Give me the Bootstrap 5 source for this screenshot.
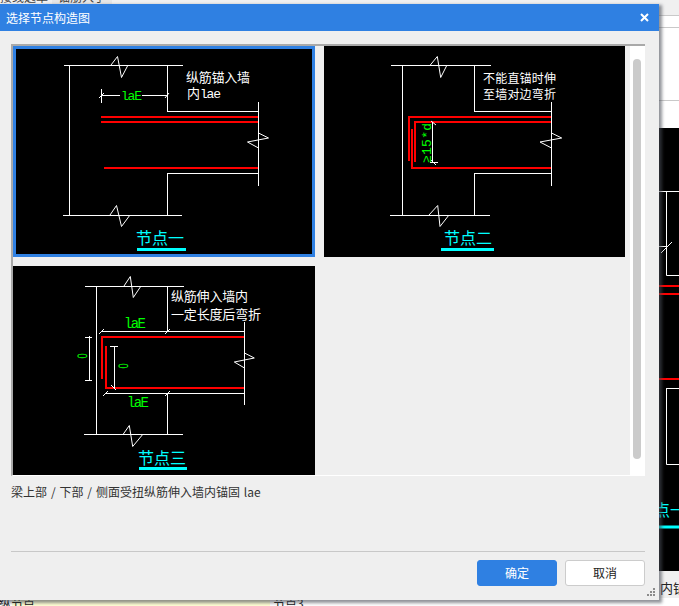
<!DOCTYPE html>
<html lang="zh">
<head>
<meta charset="utf-8">
<title>选择节点构造图</title>
<link href="https://cdn.jsdelivr.net/npm/bootstrap@5.3.0/dist/css/bootstrap.min.css" rel="stylesheet">
<style>
html,body{margin:0;padding:0;background:#f1f1f1;overflow:hidden}
body{font-family:"Noto Sans CJK SC","Liberation Sans",sans-serif;font-size:12px}
.desk{position:relative;width:679px;height:606px;overflow:hidden;background:#f0f0f0}
.bk-top{position:absolute;left:0;top:0;width:340px;height:4px;overflow:hidden;display:flex;gap:6px;line-height:12px;color:#444}
.bk-top span{background:#e6e6e6;padding:0 6px;height:14px;margin-top:-9px;white-space:nowrap}
.bk-top span:first-child{margin-left:-6px;padding:0 0 0 6px;width:52px;background:#f3f3f3}
.bk-right{position:absolute;left:659px;top:15px;width:20px;height:113px;background:#fff}
.bk-line{height:1px;background:#c9c9c9;position:absolute;left:0;right:0}
.bk-cad{position:absolute;left:659px;top:128px}
.bk-note{position:absolute;left:660px;top:580px;line-height:16px;white-space:nowrap;color:#222;font-size:13px}
.bk-strip{position:absolute;left:0;right:0;top:598px;height:8px;background:#fff;overflow:hidden}
.bk-yellow{position:absolute;left:12px;top:0;width:258px;height:8px;background:#ffffd4}
.bk-cell{position:absolute;top:-2px;line-height:14px;color:#111;font-size:12px;white-space:nowrap}
.dlg{position:absolute;left:0;top:4px;width:659px;height:596px;background:#efefef;box-shadow:2px 2px 3px 1px rgba(70,75,85,.6)}
.dlg-head{height:27px;background:#2f80e2;color:#fff;padding:0 6px;line-height:27px;font-size:12px}
.dlg-x{display:block;width:9px;height:9px;margin-right:4px}
.pane{margin:13px 14px 0 11px;height:432px;border-top:2px solid #a9a9a9;border-left:2px solid #a9a9a9;border-bottom:1px solid #fff;overflow:hidden}
.tiles{width:619px;display:grid;grid-template-columns:302px 301px;column-gap:9px;row-gap:9px;align-content:start;padding-top:0}
.tile{position:relative;background:#000;line-height:0}
.tile svg{display:block}
.tile-on{outline:3px solid #2f80e2;outline-offset:-3px}
.bar{width:15px;background:#fff;padding:13px 3px 0 3px}
.thumb{width:8px;height:400px;background:#cbcbcb;border-radius:4px}
.desc{margin:8px 0 0 11px;line-height:16px;color:#333;font-size:12px;word-spacing:1.2px}
.rule{margin:51px 14px 0 11px;height:1px;background:#c8c8c8}
.foot{margin:8px 14px 0 0}
.act{width:80px;height:26px;padding:0;font-size:12px;line-height:24px;border-radius:3px}
.act-ok{background:#2f80e2;border:1px solid #2f80e2;color:#fff}
.act-no{background:#fff;border:1px solid #ccc;color:#222}
.grip{position:absolute;right:4px;bottom:4px}
svg .w{stroke:#fff;fill:none;stroke-width:1}
svg .r{stroke:#f00;fill:none;stroke-width:2}
svg .h{stroke:#0ff;stroke-width:3}
svg text{font-family:"Noto Sans CJK SC",sans-serif;font-size:13px;fill:#fff}
svg .en{font-family:"Liberation Mono",monospace;fill:#fff;font-size:13px}
svg .dim{font-family:"Liberation Mono",monospace;fill:#0f0;font-size:13px}
svg .big{font-size:14px}
svg .nil{font-family:"Liberation Sans",sans-serif;fill:#0f0;font-size:13px;text-rendering:geometricPrecision}
svg .cap{fill:#0ff;font-size:16px}
svg .sm{font-size:12px}
</style>
</head>
<body>
<div class="desk">
  <div class="bk-top"><span>接线选单</span><span>锚筋入手</span></div>
  <div class="bk-right">
    <div class="bk-line" style="top:0"></div>
    <div class="bk-line" style="top:12px"></div>
    <div class="bk-line" style="top:85px"></div>
  </div>
  <svg class="bk-cad" width="20" height="443" viewBox="659 128 20 443">
    <rect x="659" y="128" width="20" height="443" fill="#000"/>
    <path class="w" d="M659 191.500H679M666.500 191V275.500H679M659 246.500H666M661 253L672 242M666.500 388.500H679M666.500 388V464.500H679"/>
    <path class="r" d="M659 286H679M659 294H679M659 379H679"/>
    <text class="cap" x="654" y="516">点一</text>
    <path class="h" d="M659 527H679"/>
  </svg>
  <div class="bk-note">内锚</div>
  <div class="bk-strip">
    <div class="bk-yellow"></div>
    <div class="bk-cell" style="left:-1px">纵节点</div>
    <div class="bk-cell" style="left:273px">节点3</div>
  </div>

  <div class="dlg d-flex flex-column">
    <div class="dlg-head d-flex justify-content-between align-items-center">
      <span>选择节点构造图</span>
      <svg class="dlg-x" viewBox="0 0 9 9"><path d="M1 1L8 8M8 1L1 8" stroke="#fff" stroke-width="2" fill="none"/></svg>
    </div>
    <div class="pane d-flex justify-content-between">
      <div class="tiles">
        <div class="tile tile-on">
          <svg width="302" height="211" viewBox="13 46 302 211" shape-rendering="crispEdges">
            <path class="w" d="M64 65.500H183M69.500 65V215M63 215.500H182M167.500 65V111.500H258M258.500 102V185.500M167 173.500H258M167.500 173V215"/>
            <path class="w" shape-rendering="auto" d="M111 65L117.500 56.500L121.500 77.500L128 65M110 215L116.500 205.500L121.500 226.500L130 215M258.500 133L268.500 138L247.500 142L258.500 148"/>
            <path class="w" d="M101.500 95.500H120M142 95.500H167M101.500 89V103"/>
            <path class="w" shape-rendering="auto" d="M99 98L104 93M165 98L169 93"/>
            <text class="dim" x="121" y="100" textLength="21">laE</text>
            <path class="r" d="M101 117H258M101 122H258M104 168H258"/>
            <text x="186" y="82" textLength="64">纵筋锚入墙</text>
            <text x="187" y="98">内</text><text class="en" x="200" y="98" textLength="21">lae</text>
            <text class="cap" x="136" y="244">节点一</text>
            <path class="h" d="M137 249.500H186"/>
          </svg>
        </div>
        <div class="tile">
          <svg width="301" height="211" viewBox="324 46 301 211" shape-rendering="crispEdges">
            <path class="w" d="M391 65.500H491M402.500 65V215M390 215.500H490M474.500 65V111.500H551M551.500 102V185.500M474 173.500H551M474.500 173V215"/>
            <path class="w" shape-rendering="auto" d="M430.300 65L437.300 56.500L440.700 77.500L447 65M429 215L437.700 205.500L440 226.500L449 215M551.500 133L561.700 138L540 142L551.500 148"/>
            <path class="r" d="M409 161V117H551M415 162V122H551M412 129V168H551"/>
            <path class="w" d="M432.500 122V162M430 162.500H438"/>
            <path class="w" shape-rendering="auto" d="M431 121L436 125M431 160L436 165"/>
            <text class="dim" transform="translate(431 163) rotate(-90)" textLength="40">≥15*d</text>
            <text class="sm" x="483" y="83" textLength="73">不能直锚时伸</text>
            <text class="sm" x="483" y="99" textLength="73">至墙对边弯折</text>
            <text class="cap" x="444" y="244">节点二</text>
            <path class="h" d="M441 249.500H494"/>
          </svg>
        </div>
        <div class="tile">
          <svg width="302" height="209" viewBox="13 266 302 209" shape-rendering="crispEdges">
            <path class="w" d="M85 286.500H184M96.500 286V434M84 434.500H183M167.500 286V331.500H101M244 331.500H167M244.500 322V405M105 393.500H244M167.500 393V434"/>
            <path class="w" shape-rendering="auto" d="M124 286L130.300 276.500L133.300 297.500L141 286M123 434.500L129.300 425.500L132.700 446.500L142.700 434.500M244.500 353L254.300 358L234.300 362L244.500 368"/>
            <path class="r" d="M102 379V337H244M106 346V388H244"/>
            <path class="w" d="M89.500 336V381M85 337.500H92M85 380.500H92M114.500 346V388M110 346.500H118"/>
            <path class="w" shape-rendering="auto" d="M99 334L104 329M165 334L170 329M103 396L108 391M165 396L170 391M111 385L116 390"/>
            <text class="dim big" x="124" y="328" textLength="22">laE</text>
            <text class="dim big" x="127" y="407" textLength="22">laE</text>
            <text class="nil" transform="translate(87 358.500) rotate(-90) scale(.72 1.05)">0</text>
            <text class="nil" transform="translate(128 368.500) rotate(-90) scale(.72 1.05)">0</text>
            <text x="171" y="301" textLength="77">纵筋伸入墙内</text>
            <text x="171" y="319" textLength="90">一定长度后弯折</text>
            <text class="cap" x="138" y="464">节点三</text>
            <path class="h" d="M139 468.500H187"/>
          </svg>
        </div>
      </div>
      <div class="bar"><div class="thumb"></div></div>
    </div>
    <div class="desc">梁上部 / 下部 / 侧面受扭纵筋伸入墙内锚固 lae</div>
    <div class="rule"></div>
    <div class="foot d-flex justify-content-end gap-2">
      <button type="button" class="btn act act-ok">确定</button>
      <button type="button" class="btn act act-no">取消</button>
    </div>
    <svg class="grip" width="8" height="8" viewBox="0 0 8 8"><path d="M6 0h2v2H6zM3 3h2v2H3zM6 3h2v2H6zM0 6h2v2H0zM3 6h2v2H3zM6 6h2v2H6z" fill="#8b8b8b"/></svg>
  </div>
</div>
<script src="https://cdn.jsdelivr.net/npm/bootstrap@5.3.0/dist/js/bootstrap.bundle.min.js"></script>
</body>
</html>
